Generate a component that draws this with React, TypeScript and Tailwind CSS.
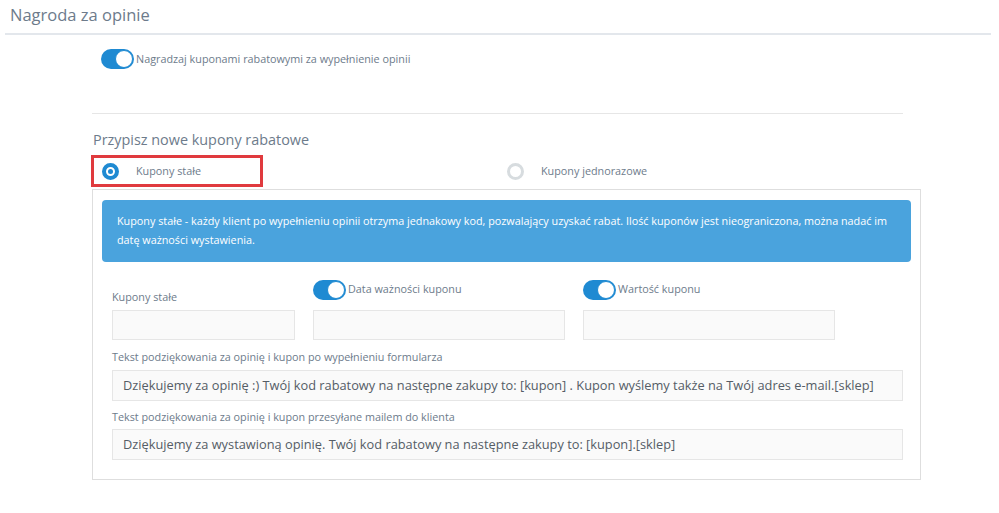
import React from "react";

function Toggle() {
  return (
    <span className="relative inline-block w-[33px] h-[20px] rounded-full bg-[#1f8ad2] shrink-0">
      <span className="absolute right-[1px] top-[1px] w-[18px] h-[18px] rounded-full bg-white border border-[#1f8ad2]" />
    </span>
  );
}

export default function App() {
  return (
    <div className="w-[999px] h-[513px] bg-white text-[#6d7b8b] overflow-hidden" style={{ fontFamily: '"Open Sans", "Noto Sans", sans-serif' }}>
      <div className="pl-[10px] pt-[3px] h-[33px] text-[16.5px] leading-[24px] text-[#6d7b8b]">Nagroda za opinie</div>
      <div className="ml-[5px] w-[986px] h-[2px] bg-[#e3e7ec]" />
      <div className="pl-[101px] pt-[13px] flex items-center gap-[2px] h-[35px]">
        <Toggle />
        <span className="text-[10.8px] leading-[14px]">Nagradzaj kuponami rabatowymi za wypełnienie opinii</span>
      </div>
      <div className="ml-[92px] mt-[43px] w-[811px] h-px bg-[#e6e6e6]" />
      <div className="pl-[93px] pt-[16px] text-[14.4px] leading-[20px]">Przypisz nowe kupony rabatowe</div>
      <div className="ml-[91px] mt-[5px] flex items-center h-[32px]">
        <div className="w-[172px] h-[32px] border-[3px] border-[#e03a3e] flex items-center pl-[8px]">
          <span className="w-[17px] h-[17px] rounded-full border-[4px] border-[#1f8ad2] flex items-center justify-center">
            <span className="w-[5px] h-[5px] rounded-full bg-[#1f8ad2]" />
          </span>
          <span className="ml-[17px] text-[10.8px]">Kupony stałe</span>
        </div>
        <div className="ml-[244px] flex items-center">
          <span className="w-[17px] h-[17px] rounded-full border-[3px] border-[#d7dcdf]" />
          <span className="ml-[17px] text-[10.8px]">Kupony jednorazowe</span>
        </div>
      </div>
      <div className="ml-[92px] mt-[2px] w-[829px] h-[291px] border border-[#dedede] px-[9px] pt-[10px]">
        <div className="h-[62px] rounded-[4px] bg-[#4aa3dd] text-white text-[10.8px] leading-[19px] pl-[15px] pr-[10px] pt-[11px]">
          Kupony stałe - każdy klient po wypełnieniu opinii otrzyma jednakowy kod, pozwalający uzyskać rabat. Ilość kuponów jest nieograniczona, można nadać im datę ważności wystawienia.
        </div>
        <div className="flex gap-[18px] pl-[10px] mt-[17px]">
          <div className="w-[183px]">
            <div className="h-[28px] flex items-end pb-[2px] text-[10.8px]">Kupony stałe</div>
            <div className="mt-[3px] h-[30px] bg-[#fafafa] border border-[#e6e6e6]" />
          </div>
          <div className="w-[252px]">
            <div className="h-[21px] flex items-center gap-[2px]">
              <Toggle />
              <span className="text-[10.8px]">Data ważności kuponu</span>
            </div>
            <div className="mt-[10px] h-[30px] bg-[#fafafa] border border-[#e6e6e6]" />
          </div>
          <div className="w-[252px]">
            <div className="h-[21px] flex items-center gap-[2px]">
              <Toggle />
              <span className="text-[10.8px]">Wartość kuponu</span>
            </div>
            <div className="mt-[10px] h-[30px] bg-[#fafafa] border border-[#e6e6e6]" />
          </div>
        </div>
        <div className="pl-[10px] mt-[9px] text-[10.8px] leading-[16px]">Tekst podziękowania za opinię i kupon po wypełnieniu formularza</div>
        <div className="ml-[10px] mt-[5px] w-[791px] h-[31px] bg-[#fafafa] border border-[#e6e6e6] flex items-center pl-[10px] text-[12.8px] text-[#555d66]">
          Dziękujemy za opinię :) Twój kod rabatowy na następne zakupy to: [kupon] . Kupon wyślemy także na Twój adres e-mail.[sklep]
        </div>
        <div className="pl-[10px] mt-[8px] text-[10.8px] leading-[16px]">Tekst podziękowania za opinię i kupon przesyłane mailem do klienta</div>
        <div className="ml-[10px] mt-[4px] w-[791px] h-[31px] bg-[#fafafa] border border-[#e6e6e6] flex items-center pl-[10px] text-[12.8px] text-[#555d66]">
          Dziękujemy za wystawioną opinię. Twój kod rabatowy na następne zakupy to: [kupon].[sklep]
        </div>
      </div>
    </div>
  );
}
